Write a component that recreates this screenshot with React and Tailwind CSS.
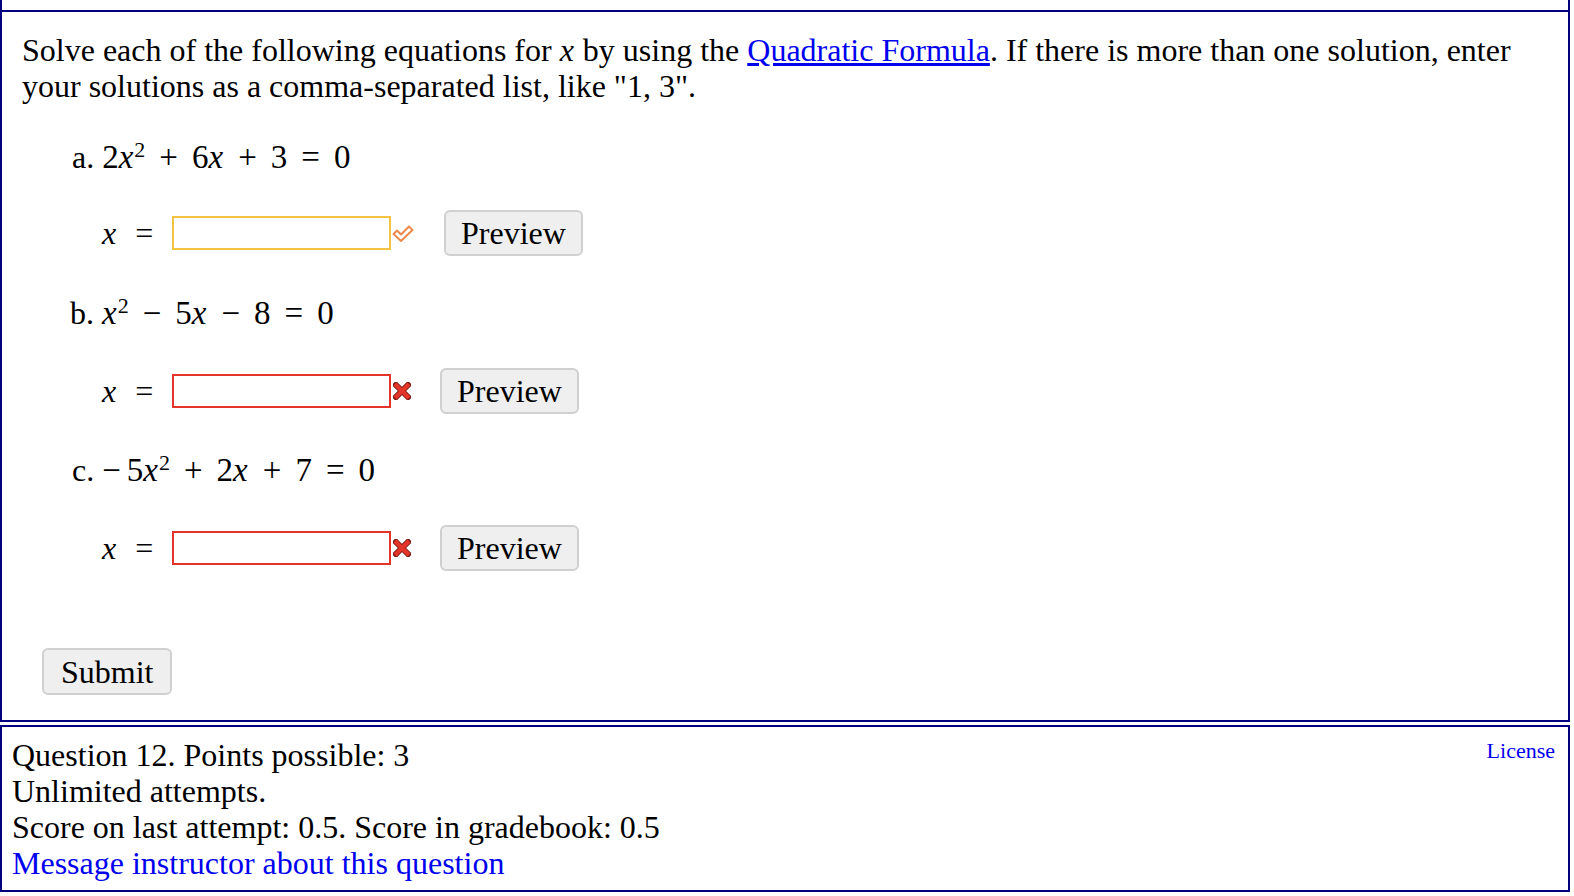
import React from 'react'

const serif = { fontFamily: '"Liberation Serif", "Times New Roman", serif' }

function X() {
  return <span className="italic mr-[1px]">x</span>
}

function Op({ children }) {
  return <span className="mx-[14px]">{children}</span>
}

function CheckIcon() {
  return (
    <svg width="22" height="19" viewBox="0 0 22 19" className="ml-[1px]">
      <polygon points="1.5,10 5,6.5 9,10.5 17,2.5 20.5,6 9,17" fill="#fff" stroke="#f08a4b" strokeWidth="2" strokeLinejoin="round" />
    </svg>
  )
}

function CrossIcon() {
  return (
    <svg width="18" height="18" viewBox="0 0 18 18" className="ml-[2px]">
      <path d="M3 3 L15 15 M15 3 L3 15" stroke="#7a1a12" strokeWidth="6" strokeLinecap="square" />
      <path d="M3.5 3.5 L14.5 14.5 M14.5 3.5 L3.5 14.5" stroke="#e3352a" strokeWidth="4.2" strokeLinecap="square" />
    </svg>
  )
}

function AnswerRow({ ok, btnGap }) {
  return (
    <div className="flex items-center h-[46px] pl-[80px]">
      <span className="w-[70px]"><X /><span className="ml-[18px]">=</span></span>
      <input
        type="text"
        className={`w-[219px] h-[34px] bg-white outline-none border-2 ${ok ? 'border-[#f5c342]' : 'border-[#e3352a]'}`}
      />
      {ok ? <CheckIcon /> : <CrossIcon />}
      <button className={`${btnGap} h-[46px] px-[15px] rounded-md bg-[#efefef] border-2 border-[#d0d0d0] text-[32px] leading-none`}>
        Preview
      </button>
    </div>
  )
}

export default function App() {
  return (
    <div className="w-[1570px] bg-white text-black text-[32px] leading-[36px]" style={serif}>
      <div className="border-x-2 border-b-2 border-[#000080]">
        <div className="h-[10px]" />
        <div className="border-t-2 border-[#000080] pl-[20px] pr-[20px] pt-[20px] pb-[25px]">
          <p>
            Solve each of the following equations for <X /> by using the{' '}
            <a href="#" className="text-[#0000ee] underline">Quadratic Formula</a>. If there is more than one solution, enter
            your solutions as a comma-separated list, like "1, 3".
          </p>

          <div className="mt-[35px] pl-[50px]">
            a. <span className="text-[33px]">2<X /><sup className="text-[22px]">2</sup><Op>+</Op>6<X /><Op>+</Op>3<Op>=</Op>0</span>
          </div>
          <div className="mt-[35px]">
            <AnswerRow ok btnGap="ml-[30px]" />
          </div>

          <div className="mt-[39px] pl-[48px]">
            b. <span className="text-[33px]"><X /><sup className="text-[22px]">2</sup><Op>−</Op>5<X /><Op>−</Op>8<Op>=</Op>0</span>
          </div>
          <div className="mt-[37px]">
            <AnswerRow btnGap="ml-[29px]" />
          </div>

          <div className="mt-[38px] pl-[50px]">
            c. <span className="text-[33px]"><span className="mr-[6px]">−</span>5<X /><sup className="text-[22px]">2</sup><Op>+</Op>2<X /><Op>+</Op>7<Op>=</Op>0</span>
          </div>
          <div className="mt-[37px]">
            <AnswerRow btnGap="ml-[29px]" />
          </div>

          <div className="mt-[77px] pl-[20px]">
            <button className="h-[47px] px-[17px] rounded-md bg-[#efefef] border-2 border-[#d0d0d0] text-[32px] leading-none">
              Submit
            </button>
          </div>
        </div>
      </div>

      <div className="mt-[3px] border-2 border-[#000080] h-[167px] pl-[10px] pr-[13px] pt-[10px] flex justify-between">
        <div>
          <div>Question 12. Points possible: 3</div>
          <div>Unlimited attempts.</div>
          <div>Score on last attempt: 0.5. Score in gradebook: 0.5</div>
          <a href="#" className="text-[#0000ee]">Message instructor about this question</a>
        </div>
        <a href="#" className="text-[#0000ee] text-[22px] leading-[28px]">License</a>
      </div>
    </div>
  )
}
